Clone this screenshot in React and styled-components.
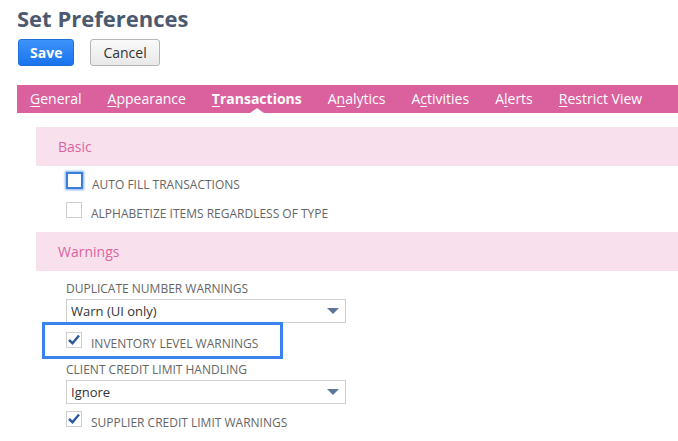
import styled, { createGlobalStyle } from 'styled-components'

const GlobalStyle = createGlobalStyle`
body {
    margin: 0;
    background: #fff;
    font-family: "Open Sans", "Liberation Sans", sans-serif;
}
`

const Page = styled.div`
padding: 3px 0 0 17px;
`

const Title = styled.h1`
margin: 0;
font-size: 22px;
line-height: 30px;
font-weight: 700;
color: #4c5a70;
`

const ButtonRow = styled.div`
display: flex;
gap: 16px;
margin-top: 6px;
padding-left: 1px;
`

const Button = styled.button`
height: 27px;
padding: 0 ${(p) => (p.$primary ? '11px' : '12px')};
border-radius: 3px;
font-family: inherit;
font-size: 14px;
font-weight: ${(p) => (p.$primary ? 700 : 400)};
color: ${(p) => (p.$primary ? '#fff' : '#333')};
border: 1px solid ${(p) => (p.$primary ? '#1f6fd8' : '#b5b5b5')};
background: ${(p) =>
    p.$primary
        ? 'linear-gradient(#3d93fa, #1a73ee)'
        : 'linear-gradient(#fafafa, #e8e8e8)'};
`

const TabBar = styled.nav`
display: flex;
align-items: center;
height: 28px;
margin-top: 19px;
background: #db619e;
`

const Tab = styled.div`
position: relative;
height: 28px;
line-height: 28px;
padding: 0 13px;
font-size: 14px;
color: #fff;
font-weight: ${(p) => (p.$active ? 700 : 400)};
u {
    text-decoration-thickness: 1px;
    text-underline-offset: 2px;
}
${(p) =>
        p.$active &&
        `&::after {
        content: '';
        position: absolute;
        left: 50%;
        bottom: 0;
        margin-left: -7px;
        border: 7px solid transparent;
        border-bottom-color: #fff;
        border-top-width: 0;
        border-bottom-width: 5px;
    }`}
`

const Content = styled.div`
margin-left: 19px;
`

const SectionHeader = styled.div`
height: 39px;
line-height: 39px;
margin-top: ${(p) => p.$top}px;
padding-left: 22px;
background: #f8e1ed;
color: #dc64a0;
font-size: 14px;
`

const Fields = styled.div`
padding-left: 30px;
`

const CheckRow = styled.label`
position: relative;
display: flex;
align-items: center;
gap: 9px;
height: ${(p) => p.$h || 29}px;
box-sizing: border-box;
padding-bottom: ${(p) => p.$pb || 0}px;
font-size: 12px;
color: #666;
`

const CheckText = styled.span`
padding-top: 7px;
`

const Box = styled.span`
display: flex;
align-items: center;
justify-content: center;
width: 16px;
height: 16px;
box-sizing: border-box;
border: 1px solid ${(p) => (p.$focus ? '#3b7fd8' : '#cfcfcf')};
background: #fff;
box-shadow: ${(p) => (p.$focus ? '0 0 2px 1px #7fb0ef' : 'none')};
${(p) => p.$focus && 'width: 17px; height: 17px; border-width: 2px;'}
`

const FieldLabel = styled.div`
font-size: 12px;
color: #666;
line-height: 16px;
margin-top: ${(p) => p.$top}px;
`

const Select = styled.div`
position: relative;
width: 280px;
height: 24px;
box-sizing: border-box;
border: 1px solid #cfcfcf;
margin-top: 2px;
padding-left: 4px;
line-height: 22px;
font-size: 13px;
color: #333;
&::after {
    content: '';
    position: absolute;
    right: 6px;
    top: 8px;
    border: 6px solid transparent;
    border-top-color: #5c7699;
    border-bottom-width: 0;
}
`

const Highlight = styled.span`
position: absolute;
left: -24px;
top: -1px;
width: 241px;
height: 37px;
box-sizing: border-box;
border: 3px solid #3a82f0;
pointer-events: none;
`

function Check() {
    return (
        <svg width="12" height="11" viewBox="0 0 12 11">
            <path d="M1 6 L4.5 9.2 L11 1.5" fill="none" stroke="#2b5a9c" strokeWidth="2.4" />
        </svg>
    )
}

const tabs = [
    ['G', 'eneral'],
    ['A', 'ppearance'],
    ['T', 'ransactions', true],
    ['An', 'alytics', false, 1],
    ['Ac', 'tivities', false, 1],
    ['Al', 'erts', false, 1],
    ['R', 'estrict View'],
]

function TabLabel({ head, rest, idx }) {
    if (idx) {
        return (
            <>
                {head[0]}
                <u>{head[1]}</u>
                {rest}
            </>
        )
    }
    return (
        <>
            <u>{head}</u>
            {rest}
        </>
    )
}

export default function App() {
    return (
        <>
            <GlobalStyle />
            <Page>
                <Title>Set Preferences</Title>
                <ButtonRow>
                    <Button $primary>Save</Button>
                    <Button>Cancel</Button>
                </ButtonRow>
                <TabBar>
                    {tabs.map(([head, rest, active, idx]) => (
                        <Tab key={head + rest} $active={active}>
                            <TabLabel head={head} rest={rest} idx={idx} />
                        </Tab>
                    ))}
                </TabBar>
                <Content>
                    <SectionHeader $top={14}>Basic</SectionHeader>
                    <Fields>
                        <CheckRow>
                            <Box $focus />
                            <CheckText>AUTO FILL TRANSACTIONS</CheckText>
                        </CheckRow>
                        <CheckRow>
                            <Box />
                            <CheckText>ALPHABETIZE ITEMS REGARDLESS OF TYPE</CheckText>
                        </CheckRow>
                    </Fields>
                    <SectionHeader $top={8}>Warnings</SectionHeader>
                    <Fields>
                        <FieldLabel $top={10}>DUPLICATE NUMBER WARNINGS</FieldLabel>
                        <Select>Warn (UI only)</Select>
                        <CheckRow $h={36} $pb={3}>
                            <Highlight />
                            <Box>
                                <Check />
                            </Box>
                            <CheckText>INVENTORY LEVEL WARNINGS</CheckText>
                        </CheckRow>
                        <FieldLabel $top={3}>CLIENT CREDIT LIMIT HANDLING</FieldLabel>
                        <Select>Ignore</Select>
                        <CheckRow>
                            <Box>
                                <Check />
                            </Box>
                            <CheckText>SUPPLIER CREDIT LIMIT WARNINGS</CheckText>
                        </CheckRow>
                    </Fields>
                </Content>
            </Page>
        </>
    )
}
